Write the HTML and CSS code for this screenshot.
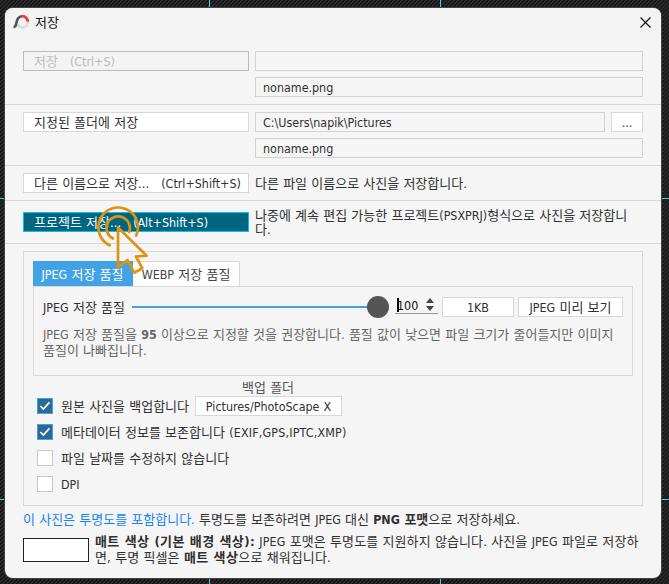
FILE: index.html
```html
<!DOCTYPE html>
<html lang="ko">
<head>
<meta charset="utf-8">
<title>저장</title>
<link rel="stylesheet" href="styles.css">
</head>
<body>
<div class="guides"><i class="g g1"></i><i class="g g2"></i><i class="g g3"></i><i class="g g4"></i></div>
<main class="dialog">
  <header class="titlebar">
    <svg class="logo" width="18" height="16" viewBox="0 0 18 16" fill="none" stroke-width="2.6">
      <path d="M14.800 6.800A5.400 5.400 0 0 1 4.600 10.200" stroke="#dcdcdf"/>
      <path d="M.5 13.200C4.200 13 2.500 8.500 4.800 4.800Q6.600 2.200 9.400 2.200" stroke="#55565a" stroke-width="2.600"/>
      <path d="M9.200 2.200A5.500 5.500 0 0 1 14.800 7.600" stroke="#f03a30" stroke-width="2.800"/>
    </svg>
    <h1 class="title">저장</h1>
    <svg class="close" width="11" height="11" viewBox="0 0 11 11" stroke="#111" stroke-width="1.2"><path d="M.5 .5L10.500 10.500M10.500 .5L.5 10.500"/></svg>
  </header>

  <section class="row row-save">
    <div class="btn wide disabled"><span>저장</span><span class="key l">(Ctrl+S)</span></div>
    <div class="fields"><div class="field"></div><div class="field l">noname.png</div></div>
  </section>
  <section class="row row-folder">
    <div class="btn wide">지정된 폴더에 저장</div>
    <div class="fields">
      <div class="pair"><div class="field path l">C:\Users\napik\Pictures</div><div class="btn more l">...</div></div>
      <div class="field l">noname.png</div>
    </div>
  </section>
  <section class="row row-as">
    <div class="btn wide"><span>다른 이름으로 저장...</span><span class="key l">(Ctrl+Shift+S)</span></div>
    <p class="desc">다른 파일 이름으로 사진을 저장합니다.</p>
  </section>
  <section class="row row-project">
    <div class="btn wide active"><span>프로젝트 저장...</span><span class="key l">(Alt+Shift+S)</span></div>
    <p class="desc">나중에 계속 편집 가능한 프로젝트<span class="l">(PSXPRJ)</span>형식으로 사진을 저장합니<br>다.</p>
  </section>

  <section class="panel">
    <nav class="tabs"><div class="tab on"><span class="l">JPEG</span> 저장 품질</div><div class="tab"><span class="l">WEBP</span> 저장 품질</div></nav>
    <div class="quality">
      <div class="controls">
        <span class="qlabel"><span class="l">JPEG</span> 저장 품질</span>
        <div class="slider"><i class="knob"></i></div>
        <div class="spin"><i class="caret"></i><span class="l num">100</span>
          <svg width="8" height="13" viewBox="0 0 8 13" fill="#444"><path d="M4 0L8 5H0zM0 8H8L4 13z"/></svg>
        </div>
        <div class="btn size l">1KB</div>
        <div class="btn preview"><span><span class="l">JPEG</span> 미리 보기</span></div>
      </div>
      <p class="hint"><span class="l">JPEG</span> 저장 품질을 <b class="l">95</b> 이상으로 지정할 것을 권장합니다. 품질 값이 낮으면 파일 크기가 줄어들지만 이미지<br>품질이 나빠집니다.</p>
    </div>
    <div class="caption">백업 폴더</div>
    <div class="option"><span class="box checked"><svg width="12" height="10" viewBox="0 0 12 10"><path d="M1.300 5L4.300 8L10.500 1.300" fill="none" stroke="#fff" stroke-width="1.700"/></svg></span><span class="olabel backup">원본 사진을 백업합니다</span><div class="btn folder l">Pictures/PhotoScape X</div></div>
    <div class="option"><span class="box checked"><svg width="12" height="10" viewBox="0 0 12 10"><path d="M1.300 5L4.300 8L10.500 1.300" fill="none" stroke="#fff" stroke-width="1.700"/></svg></span><span class="olabel">메타데이터 정보를 보존합니다 <span class="l meta">(EXIF,GPS,IPTC,XMP)</span></span></div>
    <div class="option"><span class="box"></span><span class="olabel">파일 날짜를 수정하지 않습니다</span></div>
    <div class="option"><span class="box"></span><span class="olabel l">DPI</span></div>
  </section>

  <p class="notice"><span class="blue">이 사진은 투명도를 포함합니다.</span> 투명도를 보존하려면 <span class="l">JPEG</span> 대신 <b><span class="l">PNG</span> 포맷</b>으로 저장하세요.</p>
  <section class="matte">
    <div class="swatch"></div>
    <p class="mtext"><b>매트 색상 (기본 배경 색상):</b> <span class="l">JPEG</span> 포맷은 투명도를 지원하지 않습니다. 사진을 <span class="l">JPEG</span> 파일로 저장하<br>면, 투명 픽셀은 <b>매트 색상</b>으로 채워집니다.</p>
  </section>
  <svg class="pointer" width="54" height="72" viewBox="95 204 54 72" fill="none" stroke="#e0930f" stroke-width="2.700" stroke-linecap="round" stroke-linejoin="round">
    <path d="M109.800 245.300A19.800 19.800 0 1 1 136.200 235.500"/>
    <path d="M113 238.500A11.700 11.700 0 1 1 129.200 232"/>
    <path d="M118 227.500V267.300L127.500 260L134.300 272.700L142.300 268.300L136 256.500L146.700 255.700Z"/>
  </svg>
</main>
</body>
</html>
```
FILE: styles.css
```css
* { box-sizing: border-box; }
body {
  margin: 0;
  width: 669px;
  height: 584px;
  overflow: hidden;
  padding: 8px 8px 6px 5px;
  background: repeating-linear-gradient(135deg, #171717 0 1.4px, #2b2b2b 1.4px 2.828px);
  font: 13px/16px "DejaVu Sans Condensed", "Noto Sans CJK KR", sans-serif;
  word-spacing: .5px;
  color: #303030;
}
.l { font-size: 12.4px; }
p, h1 { margin: 0; font-size: inherit; font-weight: normal; }
.g { position: absolute; background: #3dd5d5; }
.g1 { left: 209px; top: 0; width: 1px; height: 584px; }
.g2 { left: 440px; top: 0; width: 1px; height: 584px; }
.g3 { left: 0; top: 198px; width: 669px; height: 1px; }
.g4 { left: 0; top: 499px; width: 669px; height: 1px; }
.dialog { position: relative; width: 656px; height: 570px; background: #f5f5f5; border-radius: 8px; box-shadow: 0 0 0 1px #444; white-space: nowrap; }
.titlebar { height: 30px; display: flex; align-items: center; padding: 0 10px 2px 8px; background: #f3f3f3; border-radius: 8px 8px 0 0; }
.title { margin-left: 4px; padding-top: 1px; color: #111; }
.close { margin-left: auto; }
.row { display: flex; gap: 6px; padding: 0 18px; border-bottom: 1px solid #d8d8d8; }
.row-save { height: 67px; padding-top: 13px; }
.row-folder { height: 61px; padding-top: 7px; }
.row-as { height: 35px; padding-top: 7px; }
.row-project { height: 43px; padding-top: 11px; }
.btn { height: 20px; border: 1px solid #d8d8d8; padding-top: 2px; background: #fff; display: flex; align-items: center; justify-content: center; line-height: 16px; }
.wide { width: 226px; flex: none; justify-content: flex-start; padding-left: 10px; }
.key { margin-left: 12px; }
.disabled { background: #f3f3f3; border-color: #bbb; color: #bbb; }
.active { background: #006680; border-color: #00c3f5; color: #fff; }
.fields { flex: 1; display: flex; flex-direction: column; gap: 6px; }
.field { height: 20px; border: 1px solid #d2d2d2; padding: 1px 0 0 7px; line-height: 18px; }
.pair { display: flex; gap: 6px; }
.path { flex: 1; }
.more { width: 32px; }
.desc { line-height: 14px; padding-top: 4px; }
.row-project .desc { margin-top: -7px; }
.panel { width: 620px; height: 255px; margin: 7px 18px 0; border: 1px solid #d8d8d8; padding: 9px; }
.tabs { display: flex; height: 25px; }
.tab { width: 107px; border: 1px solid #d8d8d8; border-bottom: 0; border-left: 0; background: #fff; text-align: center; line-height: 24px; padding-top: 1px; color: #444; }
.tab.on { width: 100px; background: #43a2e5; border-color: #43a2e5; color: #fff; }
.quality { height: 90px; border: 1px solid #d8d8d8; padding: 10px 9px 0; }
.controls { display: flex; height: 20px; align-items: center; }
.qlabel { width: 89px; padding-top: 2px; }
.slider { width: 246px; height: 2px; background: #43a2e5; display: flex; align-items: center; justify-content: flex-end; }
.knob { width: 22px; height: 22px; border-radius: 50%; background: #555; margin-right: -11px; flex: none; }
.spin { margin: -4px 4px 0 17px; width: 43px; height: 17px; border-bottom: 1px solid #999; display: flex; align-items: center; color: #111; }
.caret { width: 2px; height: 14px; margin-left: 2px; background: #000; }
.num { margin-left: -2px; padding-top: 2px; }
.spin svg { margin-left: auto; margin-right: 4px; }
.size { width: 72px; margin-right: 4px; }
.preview { width: 105px; }
.hint { color: #666; margin-top: 10px; }
.caption { margin: 4px 0 0 209px; height: 16px; color: #555; }
.option { display: flex; align-items: center; height: 20px; margin: 0 0 6px 4px; }
.olabel { padding-top: 2px; }
.box { width: 16px; height: 16px; border: 1px solid #c8c8c8; background: #fff; display: flex; align-items: center; justify-content: center; margin-right: 8px; }
.checked { background: #2b6a96; border-color: #43a2e5; }
.backup { width: 134px; }
.folder { width: 147px; }
.meta { letter-spacing: .18px; }
.notice { margin: 6px 0 0 18px; }
.blue { color: #1683f0; }
.matte { display: flex; gap: 6px; margin: 6px 0 0 18px; }
.mtext { letter-spacing: .08px; }
.mtext b { letter-spacing: .4px; }
.swatch { width: 66px; height: 24px; margin-top: 4px; border: 1px solid #222; background: #fff; }
.pointer { position: absolute; left: 90px; top: 196px; }
```
